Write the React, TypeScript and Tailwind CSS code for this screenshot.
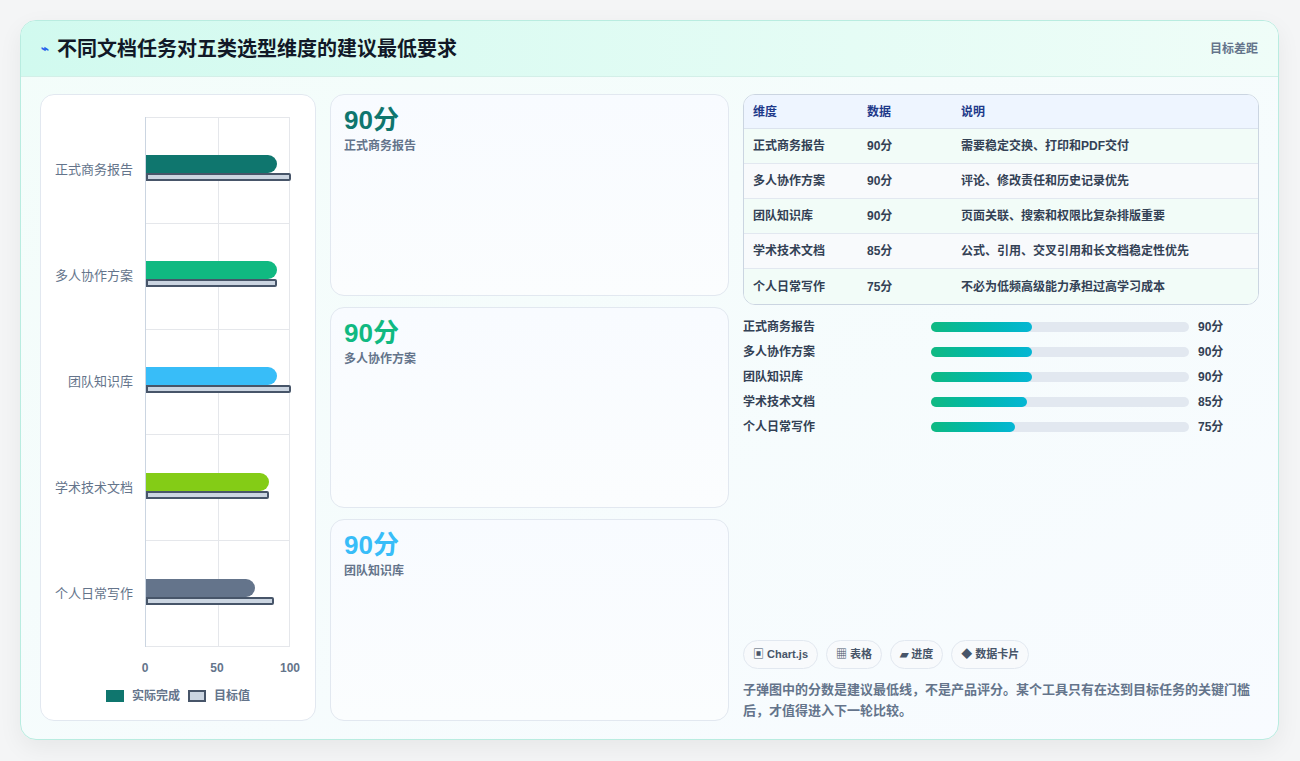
import React from "react";

const rows = [
  { name: "正式商务报告", v: 90, t: 100, c: "#0f766e", note: "需要稳定交换、打印和PDF交付" },
  { name: "多人协作方案", v: 90, t: 90, c: "#10b981", note: "评论、修改责任和历史记录优先" },
  { name: "团队知识库", v: 90, t: 100, c: "#38bdf8", note: "页面关联、搜索和权限比复杂排版重要" },
  { name: "学术技术文档", v: 85, t: 85, c: "#84cc16", note: "公式、引用、交叉引用和长文档稳定性优先" },
  { name: "个人日常写作", v: 75, t: 88, c: "#64748b", note: "不必为低频高级能力承担过高学习成本" },
];

export default function App() {
  const font = { fontFamily: '"Liberation Sans", "Noto Sans CJK SC", sans-serif' };
  return (
    <div className="w-[1300px] h-[761px] bg-[#f4f5f6] pt-[20px] pl-[20px]" style={font}>
      <div className="w-[1259px] h-[720px] rounded-[16px] border border-[#b9ece0] bg-gradient-to-br from-[#f3fdfa] to-[#f8fbff] shadow-[0_8px_24px_rgba(0,0,0,0.06)] overflow-hidden flex flex-col">
        <div className="h-[56px] flex items-center justify-between px-[20px] bg-gradient-to-r from-[#d1faef] to-[#effdf8] border-b border-[#d3efe8] shrink-0">
          <div className="flex items-center gap-[8px]">
            <span className="text-[#2563eb] text-[13px] font-bold">⌁</span>
            <span className="text-[20px] font-bold text-[#111827]">不同文档任务对五类选型维度的建议最低要求</span>
          </div>
          <span className="text-[12px] font-bold text-[#64748b]">目标差距</span>
        </div>
        <div className="flex-1 flex gap-[14px] px-[19px] pt-[17px] pb-[18px]">
          {/* chart */}
          <div className="w-[276px] bg-white rounded-[14px] border border-[#e2e8f0] flex flex-col pt-[22px]">
            <div className="flex h-[530px]">
              <div className="w-[104px] flex flex-col">
                {rows.map((r) => (
                  <div key={r.name} className="flex-1 flex items-center justify-end pr-[12px] text-[13px] text-[#64748b]">{r.name}</div>
                ))}
              </div>
              <div className="relative w-[145px] border-l border-[#cbd5e1]">
                <div className="absolute left-[72px] top-0 bottom-0 w-px bg-[#e5e7eb]" />
                <div className="absolute right-0 top-0 bottom-0 w-px bg-[#e5e7eb]" />
                <div className="flex flex-col h-full">
                  {rows.map((r, i) => (
                    <div key={r.name} className={"flex-1 flex flex-col justify-center relative border-t border-[#e5e7eb]" + (i === 4 ? " border-b" : "")}>
                      <div className="h-[18px] rounded-r-[9px]" style={{ width: `${(r.v / 100) * 145}px`, background: r.c }} />
                      <div className="h-[8px] bg-[#cbd5e1] border-2 border-[#475569] rounded-r-[2px] mb-[4px]" style={{ width: `${(r.t / 100) * 145}px` }} />
                    </div>
                  ))}
                </div>
              </div>
            </div>
            <div className="relative h-[30px] ml-[104px] text-[12px] font-bold text-[#64748b]">
              <span className="absolute left-[0px] top-[12px] -translate-x-1/2">0</span>
              <span className="absolute left-[72px] top-[12px] -translate-x-1/2">50</span>
              <span className="absolute left-[145px] top-[12px] -translate-x-1/2">100</span>
            </div>
            <div className="flex justify-center items-center gap-[8px] mt-[10px] text-[12px] font-bold text-[#64748b]">
              <span className="w-[18px] h-[12px] bg-[#0f766e]" />实际完成
              <span className="w-[18px] h-[12px] bg-[#cbd5e1] border-2 border-[#475569]" />目标值
            </div>
          </div>
          {/* middle */}
          <div className="w-[399px] flex flex-col gap-[11px]">
            {rows.slice(0, 3).map((r) => (
              <div key={r.name} className="flex-1 rounded-[14px] border border-[#e2e8f0] bg-gradient-to-b from-[#f8fbff] to-[#fbfdfe] px-[13px] pt-[10px]">
                <div className="text-[26px] font-bold leading-[30px]" style={{ color: r.c }}>{r.v}分</div>
                <div className="text-[12px] font-bold text-[#64748b] mt-[2px]">{r.name}</div>
              </div>
            ))}
          </div>
          {/* right */}
          <div className="flex-1 flex flex-col">
            <div className="rounded-[12px] border border-[#cbd5e1] overflow-hidden bg-white text-[12px]">
              <div className="flex h-[34px] items-center bg-[#eef5ff] border-b border-[#dbe3ee] font-bold text-[#1e3a8a]">
                <div className="w-[123px] pl-[9px]">维度</div><div className="w-[94px]">数据</div><div>说明</div>
              </div>
              {rows.map((r, i) => (
                <div key={r.name} className={"flex h-[35px] items-center font-bold text-[#334155] " + (i % 2 === 0 ? "bg-[#f2fcf8]" : "bg-[#f8fafc]") + (i < 4 ? " border-b border-[#e2e8f0]" : "")}>
                  <div className="w-[123px] pl-[9px]">{r.name}</div><div className="w-[94px]">{r.v}分</div><div>{r.note}</div>
                </div>
              ))}
            </div>
            <div className="mt-[9px] flex flex-col">
              {rows.map((r) => (
                <div key={r.name} className="h-[25px] flex items-center text-[12px] font-bold text-[#334155]">
                  <div className="w-[188px]">{r.name}</div>
                  <div className="w-[258px] h-[10px] rounded-full bg-[#e2e8f0]">
                    <div className="h-full rounded-full bg-gradient-to-r from-[#10b981] to-[#06b6d4]" style={{ width: `${r.v * 1.125}px` }} />
                  </div>
                  <div className="ml-[9px]">{r.v}分</div>
                </div>
              ))}
            </div>
            <div className="flex-1" />
            <div className="flex gap-[8px] text-[11px] font-bold text-[#475569]">
              {["▣ Chart.js", "▦ 表格", "▰ 进度", "◆ 数据卡片"].map((b) => (
                <span key={b} className="h-[29px] px-[9px] flex items-center rounded-full border border-[#e2e8f0] bg-[#f8fafc]">{b}</span>
              ))}
            </div>
            <div className="mt-[10px] text-[13px] font-bold text-[#64748b] leading-[21px]">子弹图中的分数是建议最低线，不是产品评分。某个工具只有在达到目标任务的关键门槛后，才值得进入下一轮比较。</div>
          </div>
        </div>
      </div>
    </div>
  );
}
